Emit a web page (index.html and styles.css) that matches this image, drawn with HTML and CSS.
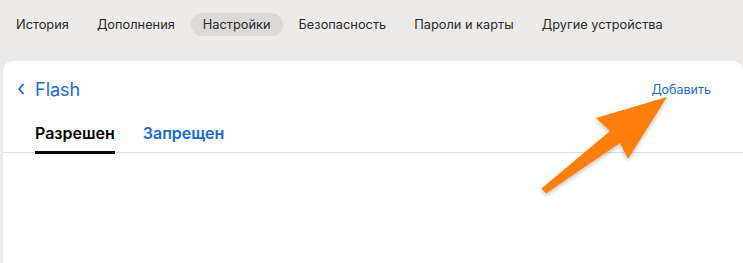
FILE: index.html
```html
<!DOCTYPE html>
<html lang="ru">
<head>
    <meta charset="UTF-8">
    <meta name="viewport" content="width=device-width, initial-scale=1.0">
    <title>Настройки — Flash</title>
    <link rel="stylesheet" href="styles.css">
</head>
<body>
    <nav class="topnav">
        <a href="#">История</a>
        <a href="#">Дополнения</a>
        <a href="#" class="active">Настройки</a>
        <a href="#">Безопасность</a>
        <a href="#">Пароли и карты</a>
        <a href="#">Другие устройства</a>
    </nav>

    <main class="card">
        <div class="card-head">
            <a href="#" class="back">
                <svg width="8" height="12" viewBox="0 0 8 12"><path d="M6 1.5 L2 6 L6 10.5" fill="none" stroke="currentColor" stroke-width="1.8" stroke-linecap="round" stroke-linejoin="round"/></svg>
                <span>Flash</span>
            </a>
            <a href="#" class="add">Добавить</a>
        </div>
        <div class="tabs">
            <a href="#" class="tab current">Разрешен</a>
            <a href="#" class="tab">Запрещен</a>
        </div>
    </main>

    <!-- стрелка-подсказка поверх страницы -->
    <svg class="pointer" width="743" height="263" viewBox="0 0 743 263">
        <defs>
            <filter id="shade" x="-20%" y="-20%" width="140%" height="140%">
                <feDropShadow dx="0" dy="2" stdDeviation="2" flood-color="#000" flood-opacity="0.25"/>
            </filter>
        </defs>
        <polygon points="667,97 596,118 610,131 541.5,188.5 546,193.5 620,143 628,159" fill="#ff7f0b" filter="url(#shade)"/>
    </svg>
</body>
</html>
```

FILE: styles.css
```css
:root {
    --bg: #ecebe9;
    --pill: #dcdad8;
    --blue: #1a6bd0;
    --text: #222;
    --line: #dedede;
}

* {
    box-sizing: border-box;
    margin: 0;
    padding: 0;
}

body {
    font-family: Inter, "Liberation Sans", Arial, sans-serif;
    background: var(--bg);
    color: var(--text);
    overflow: hidden;
}

a {
    text-decoration: none;
    color: inherit;
}

/* верхняя навигация */
.topnav {
    display: flex;
    align-items: flex-start;
    gap: 4px;
    padding: 13px 0 0 4px;
    height: 61px;
}

.topnav a {
    font-size: 12.8px;
    line-height: 23px;
    padding: 0 12px;
    border-radius: 12px;
    color: #2a2a2a;
}

.topnav a.active {
    background: var(--pill);
}

/* карточка */
.card {
    background: #fff;
    margin-left: 3px;
    border-radius: 10px 10px 0 0;
    height: 210px;
}

.card-head {
    display: flex;
    justify-content: space-between;
    align-items: center;
    padding: 0 32px 0 14px;
    height: 56px;
}

.back {
    display: flex;
    align-items: center;
    gap: 10px;
    color: var(--blue);
    font-size: 18px;
}

.add {
    color: var(--blue);
    font-size: 12.5px;
}

.tabs {
    display: flex;
    gap: 28px;
    padding: 0 32px;
    border-bottom: 1px solid var(--line);
}

.tab {
    font-size: 16px;
    font-weight: 600;
    color: var(--blue);
    padding: 6px 0 8px;
    border-bottom: 3px solid transparent;
    margin-bottom: -2px;
}

.tab.current {
    color: #000;
    border-bottom-color: #000;
}

.pointer {
    position: absolute;
    top: 0;
    left: 0;
    pointer-events: none;
}
```
